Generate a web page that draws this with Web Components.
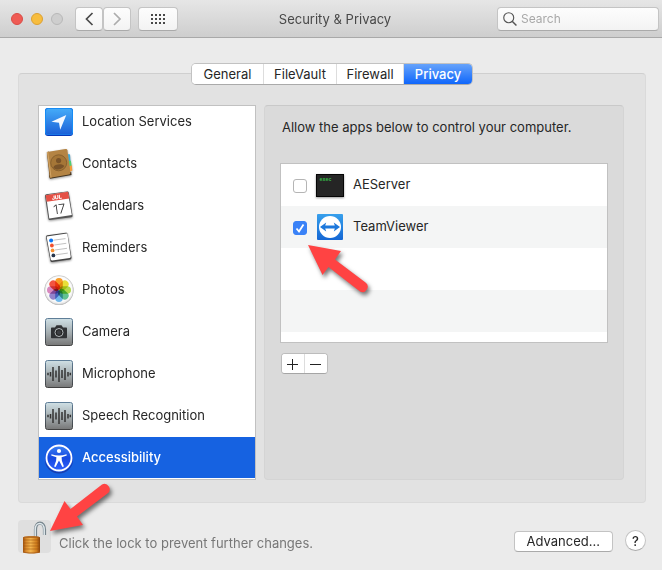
<!DOCTYPE html>
<html lang="en">
<head>
<meta charset="utf-8">
<title>Security &amp; Privacy</title>
<style>
  body { margin: 0; background: #ebebeb; color: #262626; font: 13px/16px Inter, "Liberation Sans", sans-serif; }
</style>
</head>
<body>
<security-window></security-window>

<script>
const define = (name, html, setup) => {
  const template = document.createElement('template');
  template.innerHTML = html;
  customElements.define(name, class extends HTMLElement {
    constructor() {
      super();
      this.attachShadow({ mode: 'open' }).append(template.content.cloneNode(true));
    }
    connectedCallback() { if (setup) setup(this, this.shadowRoot); }
  });
};

const plate = `
  <defs><linearGradient id="g" x2="0" y2="1"><stop stop-color="#cfe0e5"/><stop offset=".55" stop-color="#a3abae"/><stop offset="1" stop-color="#777"/></linearGradient>
  <linearGradient id="e" x2="0" y2="1"><stop stop-color="#5f7e98"/><stop offset="1" stop-color="#414141"/></linearGradient></defs>
  <rect x="1.5" y="1.5" width="27" height="27" rx="2" fill="url(#g)" stroke="url(#e)"/>`;

const ICONS = {
  location: `<defs><linearGradient id="g" x2="0" y2="1"><stop stop-color="#44aaf8"/><stop offset="1" stop-color="#1c61d8"/></linearGradient></defs>
    <rect x="1" y="1" width="28" height="28" rx="3" fill="#0638b8"/><rect x="1" y="1" width="28" height="27" rx="3" fill="#168cf5"/><rect x="2" y="2" width="26" height="25.5" rx="2" fill="url(#g)"/>
    <path d="M22.3 8 7.4 14.7l7.6 1.1 1.2 7z" fill="#f4f8ff"/>`,
  contacts: `<g filter="drop-shadow(0 1px 1px #0006)"><path d="m24 5 2 .5.6 8-2 .3z" fill="#3da9d9"/><path d="m24.7 12 2.2-.2.7 5-2 1z" fill="#52ce70"/><path d="m25 17.5 2.8-1.2.5 5.2-2.4 1.3z" fill="#f49b3b"/>
    <path d="m5 26.5 1 3.2L27.6 26l-.4-3z" fill="#42321d"/><path d="M2.8 3.2 5 2.5l2.2 26-1.5.7z" fill="#805620"/><path d="M3 3 21.5 0c1-.1 1.7.3 1.9 1.3l3 22.2c.1 1-.4 1.8-1.4 2L6.5 28.8z" fill="#b48444"/><path d="m3 3 1.2-.2 3.3 25.8-1 .2z" fill="#d1a364"/>
    <circle cx="14.7" cy="13.8" r="8" fill="#a57637" stroke="#835d2d" stroke-width=".9"/><circle cx="14.6" cy="11.6" r="2.6" fill="#795329"/><path d="M9.3 18.5c1-3.4 9-4.3 11-1.4-2.5 4.2-8.7 4.5-11 1.4" fill="#795329"/></g>`,
  calendar: `<g filter="drop-shadow(0 1px 1px #0006)"><path d="M1 5.2C.9 4.2 1.4 3.5 2.4 3.3L23 .5c1-.1 1.6.3 1.8 1.2l3.8 23c.1.8-.3 1.4-1.2 1.5L6 29c-.9.1-1.5-.3-1.6-1.2z" fill="#555"/>
    <path d="M2 4.2 23.8 1l4 23L5.3 27.5z" fill="#fff"/><path d="M1.5 4.3 24 .8l1.3 6.7L2.8 10.7z" fill="#e55045"/></g>
    <g transform="rotate(-8 15 15)"><text x="14" y="8" font-size="5.5" font-weight="800" fill="#fff" text-anchor="middle">JUL</text><text x="15" y="22.6" font-size="13" font-weight="300" fill="#333" text-anchor="middle">17</text></g>`,
  reminders: `<g filter="drop-shadow(0 1px 1px #0007)"><path d="M2 4c-.1-1 .4-1.6 1.4-1.8L21.7-.2c1-.1 1.6.2 1.8 1.2l4 23.5c.1 1-.3 1.8-1.3 2L8.2 29c-1 .2-1.6-.2-1.8-1.2z" fill="#444"/><path d="M2.6 3.6 22.8.6c.3 0 .5.2.6.5l3.3 22.5c0 .8-.3 1.3-1.1 1.4L8.2 27.4c-.8.1-1.4-.3-1.5-1.1z" fill="#fff"/></g>
    <path d="m9.5 7.2 12-1.6M10.3 12l12-1.7M11 17l12-1.7M11.8 21.8l12-1.7" stroke="#a8a8a8" stroke-width=".7"/><circle cx="7.1" cy="7.6" r="2" fill="#0875f6"/><circle cx="7.9" cy="12.5" r="1.9" fill="#f0502f"/><circle cx="8.6" cy="17.4" r="1.9" fill="#f79131"/><circle cx="9.4" cy="22.4" r="1.9" fill="#26364c"/>`,
  photos: `<circle cx="15" cy="15.5" r="14.5" fill="#999"/><circle cx="15" cy="15" r="14.4" fill="#eee" stroke="#c4c4c4" stroke-width=".7"/><circle cx="15" cy="14.5" r="13" fill="#fbfbfb"/>
    <g style="isolation:isolate">${['#f79a26','#e8df37','#b2d94c','#61c190','#71b7eb','#9283cb','#d889c0','#f35340'].map((c, i) =>
      `<rect x="11.2" y="3" width="7.6" height="11.8" rx="3.8" fill="${c}" transform="rotate(${i * 45} 15 15)" style="mix-blend-mode:multiply"/>`).join('')}</g>`,
  camera: plate + `<path d="M8 10.5h3l1.5-2.3h5l1.5 2.3h3c.7 0 1 .4 1 1v8.8c0 .6-.4 1-1 1H8c-.7 0-1-.4-1-1v-8.8c0-.6.4-1 1-1" fill="#303235"/><circle cx="15" cy="15.5" r="4" fill="#222" stroke="#b4babd"/><circle cx="15" cy="15.5" r="2.3" fill="#3c3e42"/>`,
  wave: plate + `<path d="M4 13.8v2.4M6.5 13v4.5M9 8v14M12 11.5v7M15 7v16M18 11v8M21 9v12M24 13v4.5M26.3 13.8v2.4" stroke="#333" stroke-width="1.5"/>`,
  access: `<defs><linearGradient id="g" x2="0" y2="1"><stop stop-color="#3d83f5"/><stop offset=".5" stop-color="#1648df"/><stop offset="1" stop-color="#2f62ff"/></linearGradient></defs><ellipse cx="15" cy="17" rx="14" ry="13.5" fill="#173eae"/><circle cx="15" cy="15" r="14" fill="#1952e6"/><circle cx="15" cy="15" r="12.5" fill="url(#g)" stroke="#fff" stroke-width="1.8"/><circle cx="15" cy="8" r="2.1" fill="#fff"/><path d="M7.5 11.2c5 1.6 10 1.6 15 0l.3 1.3-5.2 1.8.3 3.5 2 5.8-1.5.5-3.4-6.6-3.4 6.6-1.5-.5 2-5.8.3-3.5-5.2-1.8z" fill="#fff"/>`,
  exec: `<g filter="drop-shadow(0 1px 1px #0006)"><rect x="1" y="4" width="28" height="23" fill="#050505"/><rect x="2" y="5" width="26" height="21" fill="#252525"/></g><text x="4.5" y="11" font-size="5" font-weight="700" fill="#37bd49" style="font-family:'Liberation Mono',monospace">exec</text>`,
  teamviewer: `<defs><linearGradient id="g" x2="0" y2="1"><stop stop-color="#37a0ec"/><stop offset="1" stop-color="#1467d4"/></linearGradient></defs><rect x="2" y="2" width="26" height="26" rx="1" fill="url(#g)"/><circle cx="15" cy="15" r="11" fill="#fff"/><path d="m5 15 6.2-4.5-1 3h9.6l-1-3L25 15l-6.2 4.5 1-3h-9.6l1 3z" fill="#1d78dc"/>`,
  back: `<path d="m18.500 9-6 6 6 6" fill="none" stroke="#4a4a4a" stroke-width="1.7"/>`,
  forward: `<path d="m12 9 6 6-6 6" fill="none" stroke="#acacac" stroke-width="1.7"/>`,
  grid: [10, 14, 18].map(y => [8, 12, 16, 20].map(x => `<rect x="${x}" y="${y}" width="2" height="2" fill="#484848"/>`).join('')).join(''),
  search: `<circle cx="14" cy="14" r="6.500" fill="none" stroke="#555" stroke-width="1.500"/><path d="m18.500 18.500 5.500 5.500" stroke="#555" stroke-width="1.900"/>`,
  plus: `<path d="M9 15.500h11M14.500 10v11" stroke="#222"/>`,
  minus: `<path d="M9 15.500h11" stroke="#222"/>`,
  lock: `<defs><linearGradient id="g"><stop stop-color="#9e510f"/><stop offset=".18" stop-color="#d8892b"/><stop offset=".45" stop-color="#f4b64f"/><stop offset=".8" stop-color="#cf7c1c"/><stop offset="1" stop-color="#85420b"/></linearGradient></defs>
    <path d="M16.500 15.500V7.500C16.500-1 25.500-1 25.500 7.500V13" fill="none" stroke="#77858d" stroke-width="3.200"/><path d="M16.200 15.500V7.500C16.200-.5 25.200-.5 25.200 7.500V13" fill="none" stroke="#dfe8ec" stroke-width="1.500"/>
    <path d="M4 15.200c3-1.300 14-1.300 17 0v15c-4 1.300-13 1.300-17 0z" fill="url(#g)"/><path d="M4.500 18h16M4.500 21h16M4.500 24h16M4.500 27h16" stroke="#934b0d" stroke-width=".7" opacity=".7"/><path d="M4 15.200c3-1.300 14-1.300 17 0-4 .8-13 .8-17 0M4 29.500c4 1.300 13 1.300 17 0v1c-4 1.300-13 1.300-17 0z" fill="#ac601a"/>`
};

define('pref-icon', `<style>
  :host { display: block; flex: none; width: 30px; height: 30px; }
  svg { display: block; width: 100%; height: 100%; overflow: visible; }
</style><svg viewBox="0 0 30 30" aria-hidden="true"></svg>`, (host, root) => {
  root.querySelector('svg').innerHTML = ICONS[host.getAttribute('name')] || '';
});

define('pointer-arrow', `<style>
  :host { display: block; position: absolute; z-index: 2; pointer-events: none; }
  svg { display: block; overflow: visible; filter: drop-shadow(2px 3px 2px #0008); }
  :host([up]) path { transform: translateY(50px) scaleY(-1); }
</style><svg width="64" height="50" aria-hidden="true"><path d="M0 0 33 6 27 14.500 57.500 37.500A5.300 5.300 0 0 1 52 46.500L20.500 22 14.500 30z" fill="#ff4343"/></svg>`);

define('window-toolbar', `<style>
  :host { display: grid; grid-template-columns: 1fr auto 1fr; align-items: center; height: 37px; padding: 0 3px 0 11px; border-bottom: 1px solid #a9a9a9; background: linear-gradient(#e6e6e6, #cecece); }
  .left, .lights, .nav { display: flex; align-items: center; }
  .lights { gap: 8px; margin-right: 12px; }
  .lights button { width: 12px; height: 12px; padding: 0; border: 1px solid #d94c46; border-radius: 50%; background: #ef5b54; }
  .lights button:nth-child(2) { background: #f7bd3e; border-color: #dca033; }
  .lights button:nth-child(3) { background: #cecece; border-color: #b8b8b8; }
  .nav { margin-right: 7px; }
  .tool { box-sizing: border-box; display: flex; align-items: center; justify-content: center; width: 28px; height: 24px; padding: 0; border: 1px solid #c4c4c4; border-bottom-color: #aaa; border-radius: 4px; background: linear-gradient(#fdfdfd, #f3f3f3); }
  .wide { width: 40px; }
  h1 { margin: 0; font: inherit; color: #484848; }
  label { box-sizing: border-box; justify-self: end; display: flex; align-items: center; width: 162px; height: 24px; border: 1px solid #c4c4c4; border-bottom-color: #aaa; border-radius: 4px; background: linear-gradient(#fdfdfd, #f3f3f3); }
  label pref-icon { width: 23px; height: 23px; }
  input { min-width: 0; flex: 1; padding: 0; border: 0; outline: 0; background: none; font: inherit; font-size: 12px; }
  input::placeholder { color: #a8a8a8; opacity: 1; }
</style>
<div class="left"><div class="lights"><button aria-label="Close"></button><button aria-label="Minimize"></button><button aria-label="Zoom" disabled></button></div>
<div class="nav"><button class="tool" aria-label="Back"><pref-icon name="back"></pref-icon></button><button class="tool" aria-label="Forward"><pref-icon name="forward"></pref-icon></button></div>
<button class="tool wide" aria-label="Show all"><pref-icon name="grid"></pref-icon></button></div>
<h1><slot></slot></h1>
<label><pref-icon name="search"></pref-icon><input type="search" placeholder="Search" aria-label="Search"></label>`);

define('pane-tabs', `<style>
  :host { display: flex; justify-content: center; }
  div { display: grid; grid-template-columns: 72px 73px 67px 68px; border: 1px solid #c2c2c2; border-bottom-color: #aaa; border-radius: 5px; background: #fff; overflow: hidden; }
  button { height: 20px; padding: 0; border: 0; border-right: 1px solid #ddd; background: #fff; color: inherit; font: inherit; }
  button[aria-selected=true] { border: 0; color: #fff; font-weight: 500; background: linear-gradient(#66a3fb, #0f66fb); }
</style><div role="tablist"><button role="tab">General</button><button role="tab">FileVault</button><button role="tab">Firewall</button><button role="tab" aria-selected="true">Privacy</button></div>`);

define('service-item', `<style>
  :host { display: block; flex: none; }
  button { box-sizing: border-box; display: flex; align-items: center; gap: 8px; width: 100%; height: 41px; padding: 0 5px; border: 0; background: none; color: inherit; font: inherit; text-align: left; }
  span { padding-bottom: 2px; }
  :host([selected]) button { background: #1662e1; color: #fff; font-weight: 500; }
</style><button><pref-icon></pref-icon><span><slot></slot></span></button>`, (host, root) => {
  const icon = root.querySelector('pref-icon');
  icon.setAttribute('name', host.getAttribute('icon'));
  icon.connectedCallback();
});

define('service-list', `<style>
  :host { box-sizing: border-box; display: flex; flex-direction: column; justify-content: flex-end; gap: 1px; height: 375px; padding-bottom: 1px; border: 1px solid #c1c1c1; background: #fff; overflow: hidden; }
</style><slot></slot>`);

define('app-row', `<style>
  :host { position: relative; display: flex; align-items: center; height: 42px; padding-left: 12px; }
  label { display: flex; align-items: center; }
  input { appearance: none; box-sizing: border-box; width: 14px; height: 14px; margin: 2px 8px 0 0; border: 1px solid #b5b5b5; border-radius: 3px; background: #fff; }
  input:checked { border-color: #3a82f7; background: #3a82f7; }
  .box { position: relative; display: flex; }
  svg { position: absolute; left: 0; top: 2px; pointer-events: none; display: none; }
  input:checked + svg { display: block; }
  span { padding: 0 0 2px 8px; }
</style><label><div class="box"><input type="checkbox"><svg width="14" height="14" aria-hidden="true"><path d="m3.500 7.500 2.500 3 4.500-7" fill="none" stroke="#fff" stroke-width="1.800"/></svg></div><pref-icon></pref-icon><span><slot></slot></span></label><slot name="note"></slot>`, (host, root) => {
  root.querySelector('input').checked = host.hasAttribute('checked');
  const icon = root.querySelector('pref-icon');
  icon.setAttribute('name', host.getAttribute('icon'));
  icon.connectedCallback();
});

define('app-panel', `<style>
  :host { box-sizing: border-box; display: block; padding: 13px 15px 0; border: 1px solid #d4d4d4; border-top-color: #c9c9c9; border-radius: 4px; background: #dadada; }
  p { margin: 0 2px 28px; }
  .apps { min-height: 178px; border: 1px solid #c1c1c1; background: repeating-linear-gradient(#fff 0 42px, #f4f5f5 42px 84px); }
  .edit { display: inline-flex; margin: 10px 0 0 1px; border: 1px solid #bcbcbc; border-bottom-color: #a5a5a5; border-radius: 4px; background: #fff; overflow: hidden; }
  button { display: flex; align-items: center; justify-content: center; width: 22px; height: 19px; padding: 0; border: 0; background: #fff; }
  button + button { width: 23px; border-left: 1px solid #ddd; }
</style><p>Allow the apps below to control your computer.</p><div class="apps"><slot></slot></div><div class="edit"><button aria-label="Add"><pref-icon name="plus"></pref-icon></button><button aria-label="Remove"><pref-icon name="minus"></pref-icon></button></div>`);

define('window-footer', `<style>
  :host { display: flex; align-items: center; padding: 17px 16px 17px 18px; }
  .lock { position: relative; margin-right: 8px; }
  .lock button { display: block; width: 33px; height: 33px; padding: 0 0 0 1px; border: 0; border-radius: 4px; background: #dfdfdf; }
  p { flex: 1; margin: 0; padding-top: 12px; color: #777; }
  .push { box-sizing: border-box; height: 21px; margin: 9px 12px 0 0; padding: 0 12px; border: 1px solid #c3c3c3; border-bottom-color: #aaa; border-radius: 4px; background: #fff; color: inherit; font: inherit; line-height: 18px; }
  .help { box-sizing: border-box; width: 21px; height: 21px; margin-top: 8px; padding: 0; border: 1px solid #c3c3c3; border-bottom-color: #aaa; border-radius: 50%; background: #fff; color: inherit; font: inherit; font-weight: 500; }
</style><div class="lock"><button aria-label="Lock"><pref-icon name="lock"></pref-icon></button><slot name="note"></slot></div>
<p>Click the lock to prevent further changes.</p><button class="push">Advanced...</button><button class="help" aria-label="Help">?</button>`);

define('security-window', `<style>
  :host { display: block; }
  main { padding: 25px 16px 0 18px; }
  pane-tabs { position: relative; z-index: 1; margin-bottom: -12px; }
  .panel { display: grid; grid-template-columns: minmax(0, 218px) minmax(0, 1fr); gap: 8px; padding: 31px 21px 22px 19px; border: 1px solid #dadada; border-top-color: #cfcfcf; border-radius: 4px; background: #e2e2e2; }
  app-row pointer-arrow { left: 27px; top: 39px; }
  window-footer pointer-arrow { left: 32px; bottom: 22px; }
</style>
<window-toolbar>Security &amp; Privacy</window-toolbar>
<main><pane-tabs></pane-tabs><div class="panel">
<service-list>
<service-item icon="location">Location Services</service-item>
<service-item icon="contacts">Contacts</service-item>
<service-item icon="calendar">Calendars</service-item>
<service-item icon="reminders">Reminders</service-item>
<service-item icon="photos">Photos</service-item>
<service-item icon="camera">Camera</service-item>
<service-item icon="wave">Microphone</service-item>
<service-item icon="wave">Speech Recognition</service-item>
<service-item icon="access" selected>Accessibility</service-item>
</service-list>
<app-panel><app-row icon="exec">AEServer</app-row><app-row icon="teamviewer" checked>TeamViewer<pointer-arrow slot="note"></pointer-arrow></app-row></app-panel>
</div></main>
<window-footer><pointer-arrow slot="note" up></pointer-arrow></window-footer>`);
</script>
</body>
</html>
